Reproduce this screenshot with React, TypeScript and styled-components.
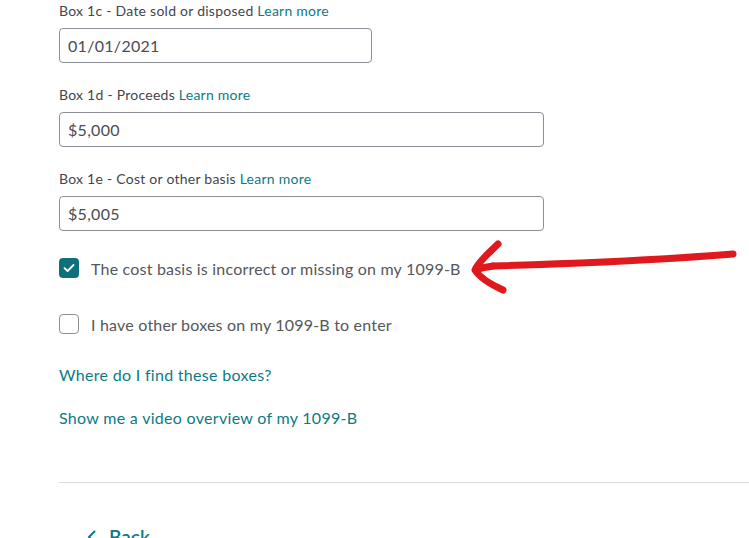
import styled, { createGlobalStyle } from "styled-components";

const GlobalStyle = createGlobalStyle`
  html, body {
    margin: 0;
    padding: 0;
    background: #ffffff;
    overflow: hidden;
  }
  body {
    font-family: "Lato", "Noto Sans", "Liberation Sans", sans-serif;
    color: #393a3d;
  }
`;

const teal = "#0d7a85";

const Page = styled.div`
  position: relative;
  width: 749px;
  height: 538px;
  overflow: hidden;
  padding: 2px 0 0 59px;
  box-sizing: border-box;
`;

const Field = styled.div`
  display: flex;
  flex-direction: column;
  gap: 8px;
  margin-bottom: 23px;
`;

const Label = styled.label`
  font-size: 14px;
  line-height: 18px;
  letter-spacing: 0.25px;
  color: #44464a;
`;

const LearnMore = styled.a`
  color: ${teal};
  text-decoration: none;
  cursor: pointer;
`;

const TextInput = styled.input<{ $width: number }>`
  width: ${(p) => p.$width}px;
  height: 35px;
  box-sizing: border-box;
  border: 1px solid #8d9096;
  border-radius: 4px;
  padding: 0 8px;
  font-family: inherit;
  font-size: 16px;
  letter-spacing: 0.3px;
  color: #4a4c50;
  background: #fff;
  outline: none;
`;

const CheckRow = styled.label`
  display: flex;
  align-items: center;
  gap: 12px;
  height: 20px;
  font-size: 16px;
  letter-spacing: 0.2px;
  color: #55575b;
  cursor: pointer;
`;

const CheckBox = styled.span<{ $checked: boolean }>`
  width: 20px;
  height: 20px;
  box-sizing: border-box;
  border-radius: 4px;
  border: ${(p) => (p.$checked ? "none" : "1px solid #8d9096")};
  background: ${(p) => (p.$checked ? "#0e6f7d" : "#fff")};
  display: flex;
  align-items: center;
  justify-content: center;
  flex-shrink: 0;
`;

const Checks = styled.div`
  display: flex;
  flex-direction: column;
  gap: 36px;
  margin-top: 27px;
`;

const Links = styled.div`
  display: flex;
  flex-direction: column;
  gap: 24px;
  margin-top: 31px;
`;

const HelpLink = styled.a`
  font-size: 16px;
  line-height: 19px;
  letter-spacing: 0.3px;
  color: ${teal};
  text-decoration: none;
  cursor: pointer;
`;

const Divider = styled.hr`
  border: none;
  border-top: 1px solid #d9dadc;
  margin: 55px 0 0 0;
`;

const BackButton = styled.button`
  display: flex;
  align-items: center;
  gap: 12px;
  margin: 42px 0 0 28px;
  padding: 0;
  border: none;
  background: none;
  font-family: inherit;
  font-size: 19px;
  font-weight: 600;
  color: ${teal};
  cursor: pointer;
`;

const Annotation = styled.svg`
  position: absolute;
  left: 0;
  top: 0;
  pointer-events: none;
`;

const Check = () => (
  <svg width="12" height="10" viewBox="0 0 12 10">
    <path d="M1.5 5.2 L4.6 8 L10.5 2" fill="none" stroke="#fff" strokeWidth="1.8" strokeLinecap="round" strokeLinejoin="round" />
  </svg>
);

const App = () => {
  return (
    <>
      <GlobalStyle />
      <Page>
        <Field>
          <Label>
            Box 1c - Date sold or disposed <LearnMore>Learn more</LearnMore>
          </Label>
          <TextInput $width={313} readOnly value="01/01/2021" />
        </Field>
        <Field>
          <Label>
            Box 1d - Proceeds <LearnMore>Learn more</LearnMore>
          </Label>
          <TextInput $width={485} readOnly value="$5,000" />
        </Field>
        <Field>
          <Label>
            Box 1e - Cost or other basis <LearnMore>Learn more</LearnMore>
          </Label>
          <TextInput $width={485} readOnly value="$5,005" />
        </Field>
        <Checks>
          <CheckRow>
            <CheckBox $checked>
              <Check />
            </CheckBox>
            The cost basis is incorrect or missing on my 1099-B
          </CheckRow>
          <CheckRow>
            <CheckBox $checked={false} />
            I have other boxes on my 1099-B to enter
          </CheckRow>
        </Checks>
        <Links>
          <HelpLink>Where do I find these boxes?</HelpLink>
          <HelpLink>Show me a video overview of my 1099-B</HelpLink>
        </Links>
        <Divider />
        <BackButton>
          <svg width="10" height="14" viewBox="0 0 10 14">
            <path d="M7.5 1.5 L2 7 L7.5 12.5" fill="none" stroke={teal} strokeWidth="2" strokeLinecap="round" strokeLinejoin="round" />
          </svg>
          Back
        </BackButton>
        <Annotation width="749" height="538" viewBox="0 0 749 538">
          <path
            d="M733 254 C 660 260, 560 264, 493 266 M 498 244 C 488 254, 478 262, 475 270 C 480 278, 492 285, 503 290"
            fill="none"
            stroke="#e0191e"
            strokeWidth="7"
            strokeLinecap="round"
            strokeLinejoin="round"
          />
          <path d="M493 266 C 486 267, 480 268, 476 270" fill="none" stroke="#e0191e" strokeWidth="7" strokeLinecap="round" />
        </Annotation>
      </Page>
    </>
  );
};

export default App;
